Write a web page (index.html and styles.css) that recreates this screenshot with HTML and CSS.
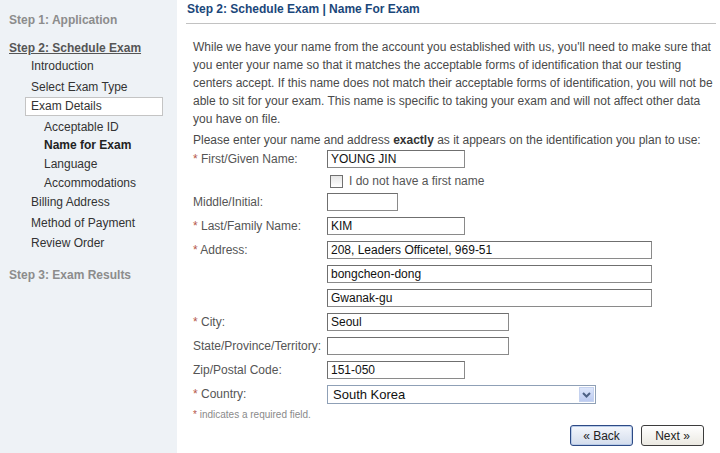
FILE: index.html
```html
<!DOCTYPE html>
<html>
<head>
<meta charset="utf-8">
<link rel="stylesheet" href="styles.css">
</head>
<body>
<div class="page">
  <nav class="side">
    <div class="step step1">Step 1: Application</div>
    <div class="step step2">Step 2: Schedule Exam</div>
    <div class="item i-intro">Introduction</div>
    <div class="item i-select">Select Exam Type</div>
    <div class="item current">Exam Details</div>
    <div class="sub s-accept">Acceptable ID</div>
    <div class="sub s-name">Name for Exam</div>
    <div class="sub s-lang">Language</div>
    <div class="sub s-acc">Accommodations</div>
    <div class="item i-bill">Billing Address</div>
    <div class="item i-pay">Method of Payment</div>
    <div class="item i-review">Review Order</div>
    <div class="step step3">Step 3: Exam Results</div>
  </nav>
  <main class="main">
    <h1 class="title">Step 2: Schedule Exam | Name For Exam</h1>
    <div class="content">
      <p class="intro">While we have your name from the account you established with us, you'll need to make sure that you enter your name so that it matches the acceptable forms of identification that our testing centers accept. If this name does not match their acceptable forms of identification, you will not be able to sit for your exam. This name is specific to taking your exam and will not affect other data you have on file.</p>
      <p class="lead">Please enter your name and address <b>exactly</b> as it appears on the identification you plan to use:</p>
      <div class="form">
        <div class="row">
          <label class="lbl"><span class="req">*</span> First/Given Name:</label>
          <div class="field w137">YOUNG JIN</div>
        </div>
        <div class="row chkrow">
          <span class="lbl"></span>
          <span class="chk"></span><span class="chktext">I do not have a first name</span>
        </div>
        <div class="row r-mid">
          <label class="lbl">Middle/Initial:</label>
          <div class="field w70"></div>
        </div>
        <div class="row">
          <label class="lbl"><span class="req">*</span> Last/Family Name:</label>
          <div class="field w137">KIM</div>
        </div>
        <div class="row">
          <label class="lbl"><span class="req">*</span> Address:</label>
          <div class="stack">
            <div class="field w324">208, Leaders Officetel, 969-51</div>
            <div class="field w324">bongcheon-dong</div>
            <div class="field w324">Gwanak-gu</div>
          </div>
        </div>
        <div class="row">
          <label class="lbl"><span class="req">*</span> City:</label>
          <div class="field w181">Seoul</div>
        </div>
        <div class="row">
          <label class="lbl">State/Province/Territory:</label>
          <div class="field w181"></div>
        </div>
        <div class="row">
          <label class="lbl">Zip/Postal Code:</label>
          <div class="field w137">151-050</div>
        </div>
        <div class="row">
          <label class="lbl"><span class="req">*</span> Country:</label>
          <div class="select">
            <span class="seltext">South Korea</span>
            <span class="arrow"><svg width="9" height="6" viewBox="0 0 9 6"><path d="M1 1 L4.5 4.5 L8 1" fill="none" stroke="#4d6185" stroke-width="2"/></svg></span>
          </div>
        </div>
      </div>
      <div class="note"><span class="req">*</span> indicates a required field.</div>
      <div class="buttons">
        <button class="btn back">« Back</button>
        <button class="btn next">Next »</button>
      </div>
    </div>
  </main>
</div>
</body>
</html>
```
FILE: styles.css
```css
html, body {
  margin: 0;
  padding: 0;
  background: #ffffff;
}
body {
  font-family: "Liberation Sans", Arial, sans-serif;
  font-size: 12px;
  color: #4a4a4a;
}
.page {
  display: flex;
  width: 720px;
  height: 453px;
  overflow: hidden;
}
.side {
  width: 177px;
  flex: none;
  background: #eef2f6;
  display: flex;
  flex-direction: column;
  padding-top: 11px;
  box-sizing: border-box;
}
.side > div {
  line-height: 18px;
  height: 18px;
  white-space: nowrap;
}
.step {
  padding-left: 9px;
  font-weight: bold;
  color: #8c8c8c;
}
.step2 {
  margin-top: 10px;
  color: #555;
  text-decoration: underline;
}
.item {
  padding-left: 31px;
  color: #333;
}
.sub {
  padding-left: 44px;
  color: #333;
}
.i-select { margin-top: 3px; }
.current {
  margin: 1px 14px 0 25px;
  padding-left: 5px;
  background: #fff;
  border: 1px solid #c4c4c4;
  height: 17px !important;
  line-height: 17px !important;
}
.s-accept { margin-top: 2px; }
.s-name { font-weight: bold; color: #222 !important; }
.s-lang { margin-top: 1px; }
.s-acc { margin-top: 1px; }
.i-bill { margin-top: 1px; }
.i-pay { margin-top: 3px; }
.i-review { margin-top: 2px; }
.step3 { margin-top: 14px; }

.main {
  flex: 1;
  padding: 0 8px 0 9px;
}
.title {
  margin: 0;
  font-size: 12px;
  font-weight: bold;
  color: #1b477a;
  line-height: 16px;
  padding: 1px 0 6px 1px;
  border-bottom: 1px solid #c2c2c2;
}
.content {
  padding-left: 7px;
}
.intro {
  margin: 14px 0 0;
  line-height: 18px;
  width: 523px;
}
.lead {
  margin: 3px 0 0;
  line-height: 18px;
}
.lead b { color: #333; }
.form {
  display: flex;
  flex-direction: column;
  gap: 6px;
  margin-top: 1px;
}
.row {
  display: flex;
  align-items: flex-start;
}
.lbl {
  width: 134px;
  flex: none;
  line-height: 18px;
  color: #555;
}
.req { color: #b5584a; }
.field {
  box-sizing: border-box;
  height: 18px;
  border: 1px solid #8a8a8a;
  border-top-color: #6f6f6f;
  border-left-color: #6f6f6f;
  background: #fff;
  color: #111;
  line-height: 16px;
  padding-left: 3px;
  font-size: 12px;
  white-space: nowrap;
}
.w137 { width: 138px; }
.w70 { width: 71px; }
.w324 { width: 325px; }
.w181 { width: 182px; }
.stack {
  display: flex;
  flex-direction: column;
  gap: 6px;
}
.chkrow {
  margin-top: -2px;
  align-items: center;
  height: 18px;
}
.chk {
  width: 11px;
  height: 11px;
  border: 1px solid #707070;
  background: linear-gradient(#e6e6e6, #fff);
  margin-left: 3px;
  flex: none;
}
.chktext {
  margin-left: 6px;
  color: #555;
}
.r-mid { margin-top: -3px; }
.select {
  box-sizing: border-box;
  width: 269px;
  height: 19px;
  border: 1px solid #8fa0b6;
  background: #fff;
  display: flex;
  align-items: center;
  justify-content: space-between;
  padding: 1px;
}
.seltext {
  font-size: 13px;
  color: #111;
  padding-left: 4px;
}
.arrow {
  width: 15px;
  height: 15px;
  box-sizing: border-box;
  background: linear-gradient(#dde6fb, #bccbf1);
  border: 1px solid #c5d2ef;
  display: flex;
  align-items: center;
  justify-content: center;
}
.note {
  margin-top: 4px;
  font-size: 10px;
  line-height: 14px;
  color: #8a8a8a;
}
.buttons {
  display: flex;
  justify-content: flex-end;
  gap: 8px;
  margin-top: 3px;
  padding-right: 12px;
}
.btn {
  font-family: "Liberation Sans", Arial, sans-serif;
  font-size: 12px;
  color: #222;
  width: 63px;
  height: 21px;
  border-radius: 3px;
  padding: 0;
  line-height: 18px;
}
.back {
  border: 1px solid #2d4a85;
  background: linear-gradient(#f4f7fc, #d3dcec);
  box-shadow: inset 0 0 0 1px #b8cbe8;
}
.next {
  border: 1px solid #3c3c3c;
  background: linear-gradient(#ffffff, #ebe9e2);
}
```
